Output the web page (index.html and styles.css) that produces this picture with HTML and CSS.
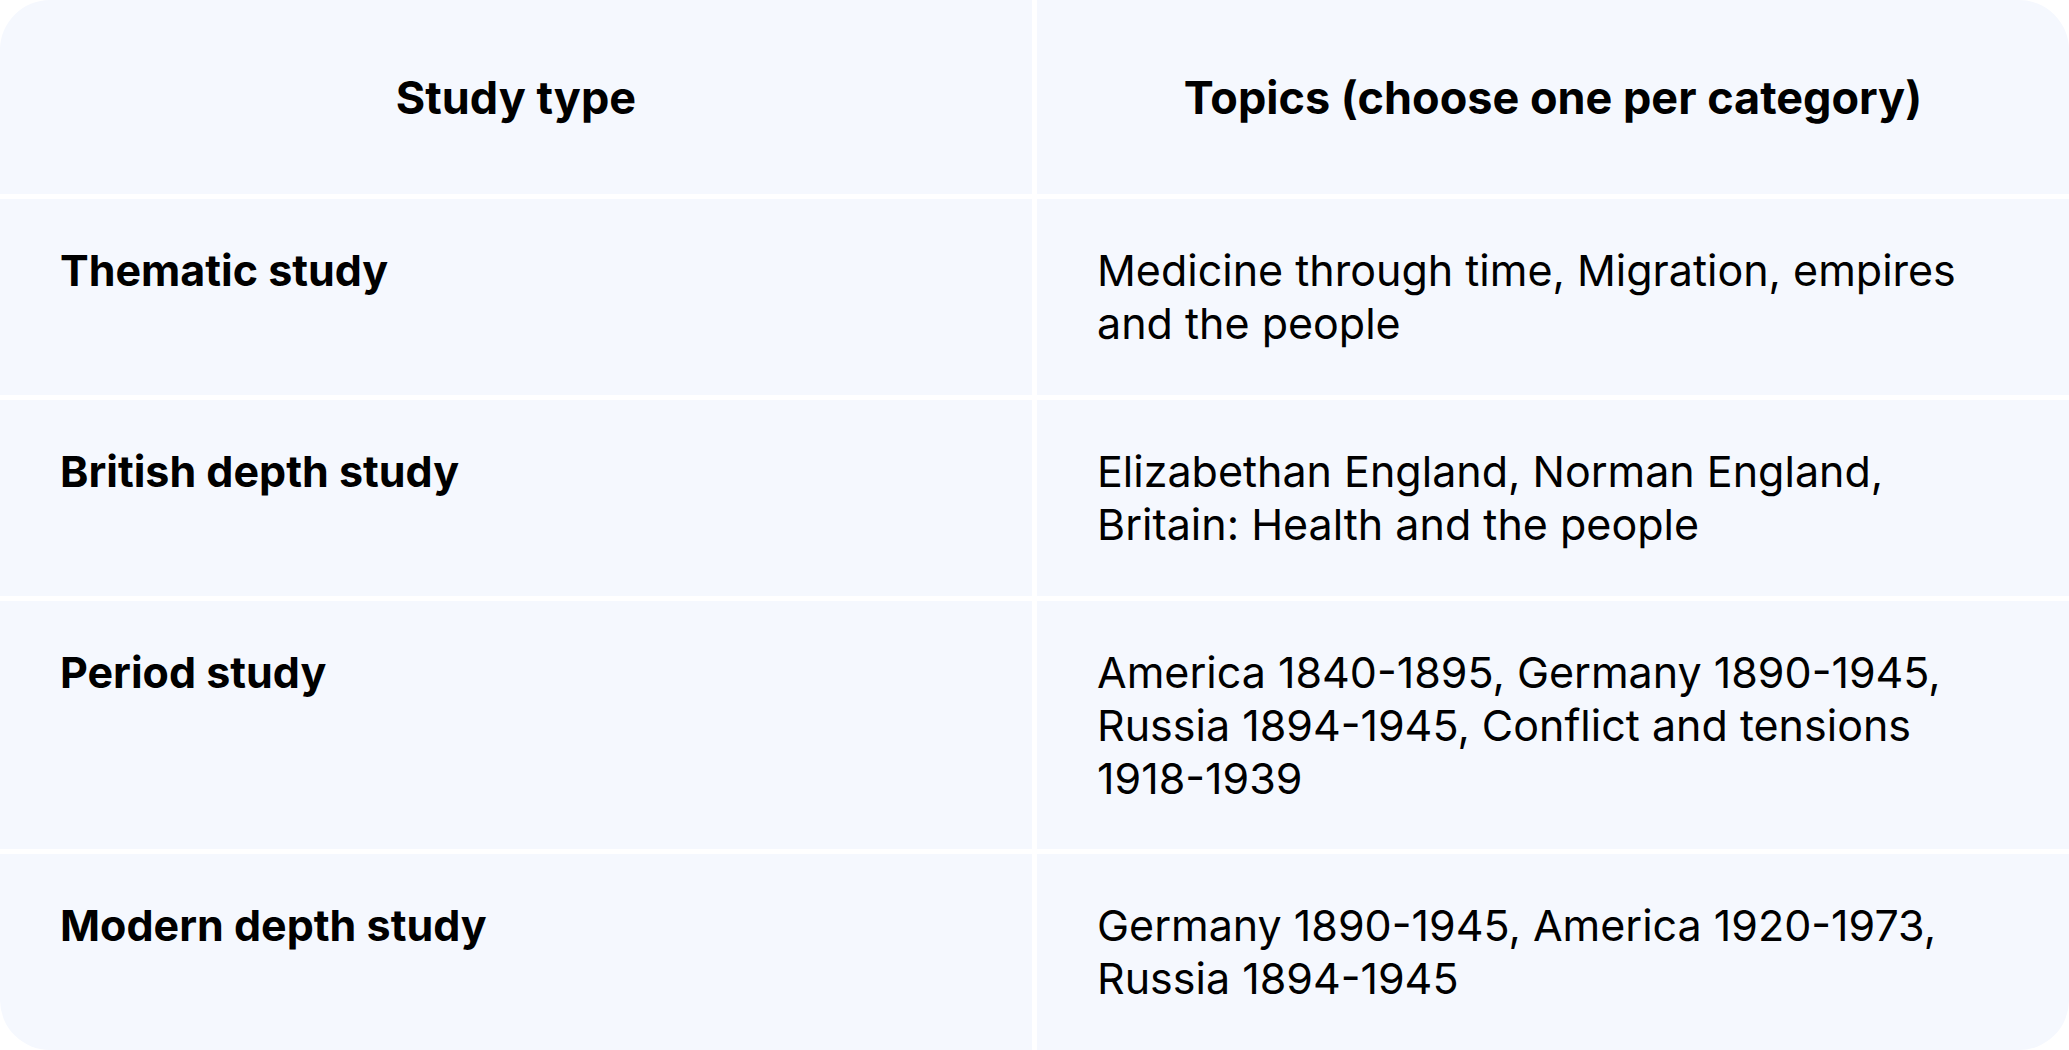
FILE: index.html
```html
<!DOCTYPE html>
<html lang="en">
<head>
<meta charset="utf-8">
<title>Study types</title>
<link rel="stylesheet" href="styles.css">
</head>
<body>
<div class="table">
  <div class="cell head">Study type</div>
  <div class="cell head">Topics (choose one per category)</div>

  <div class="cell label">Thematic study</div>
  <div class="cell topics">Medicine through time, Migration, empires and the people</div>

  <div class="cell label">British depth study</div>
  <div class="cell topics">Elizabethan England, Norman England, Britain: Health and the people</div>

  <div class="cell label">Period study</div>
  <div class="cell topics">America 1840-1895, Germany 1890-1945, Russia 1894-1945, Conflict and tensions 1918-1939</div>

  <div class="cell label">Modern depth study</div>
  <div class="cell topics">Germany 1890-1945, America 1920-1973, Russia 1894-1945</div>
</div>
</body>
</html>
```

FILE: styles.css
```css
html, body {
  margin: 0;
  padding: 0;
  background: #ffffff;
}

body {
  font-family: Inter, "Noto Sans", "Liberation Sans", sans-serif;
  color: #000000;
  width: 2069px;
  height: 1050px;
  overflow: hidden;
}

.table {
  display: grid;
  grid-template-columns: 1032px 1032px;
  grid-template-rows: 194px auto auto auto;
  column-gap: 5px;
  row-gap: 5px;
  background: #ffffff;
  border-radius: 50px;
  overflow: hidden;
  height: 1050px;
}

.cell {
  background: #f5f8fe;
  font-size: 45px;
  line-height: 53px;
}

.head {
  display: flex;
  align-items: center;
  justify-content: center;
  font-weight: 700;
}

.label {
  font-weight: 700;
  font-size: 43px;
  padding: 45px 60px 43px 60px;
}

.topics {
  font-weight: 400;
  font-size: 43px;
  padding: 45px 60px 43px 60px;
}
```
